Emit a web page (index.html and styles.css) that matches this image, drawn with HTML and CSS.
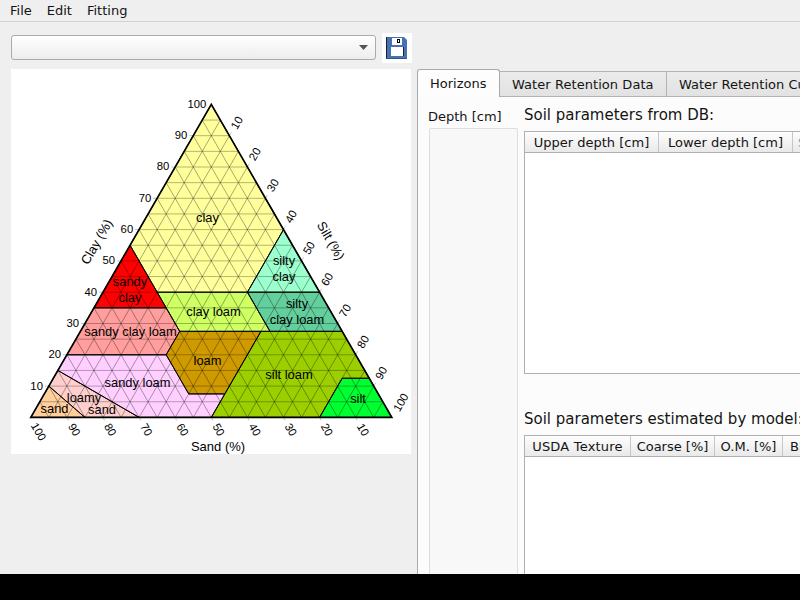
FILE: index.html
```html
<!DOCTYPE html>
<html lang="en">
<head>
<meta charset="utf-8">
<title>Soil Texture</title>
<link rel="stylesheet" href="styles.css">
</head>
<body>
<div class="window">
  <nav class="menubar"><span>File</span><span>Edit</span><span>Fitting</span></nav>
  <div class="main">
    <section class="left">
      <div class="toolbar">
        <div class="combo"><svg width="9" height="5" viewBox="0 0 9 5"><path d="M0 0H9L4.5 5Z" fill="#555"/></svg></div>
        <div class="save">
          <svg width="30" height="30" viewBox="0 0 30 30">
            <path d="M4 4H22L25 7V26H4Z" fill="#4672b4"/>
            <path d="M4.5 4V26" stroke="#182030" stroke-width="1"/>
            <path d="M4 25.5H25" stroke="#30558e" stroke-width="1"/>
            <rect x="10" y="5" width="10" height="7" fill="#fff"/>
            <rect x="15.5" y="6.5" width="2" height="3" fill="#fff" stroke="#000" stroke-width="1"/>
            <rect x="9" y="14" width="13" height="9" fill="#fff"/>
            <path d="M21.5 14V23" stroke="#182030" stroke-width="1"/>
          </svg>
        </div>
      </div>
      <svg class="chart" id="chart" width="400" height="385" viewBox="11 69 400 385"></svg>
    </section>
    <section class="right">
      <div class="tabs">
        <div class="tab active">Horizons</div>
        <div class="tab second">Water Retention Data</div>
        <div class="tab third">Water Retention Curve</div>
      </div>
      <div class="pane">
        <div class="depth"><div class="depth-label">Depth [cm]</div><div class="depth-box"></div></div>
        <div class="tables">
          <h2>Soil parameters from DB:</h2>
          <div class="table first">
            <div class="head"><span class="w134">Upper depth [cm]</span><span class="w134">Lower depth [cm]</span><span class="cut">Sand [%]</span></div>
          </div>
          <h2>Soil parameters estimated by model:</h2>
          <div class="table last">
            <div class="head"><span class="w106">USDA Texture</span><span class="w84">Coarse [%]</span><span class="w68">O.M. [%]</span><span class="bd">BD [g/cm3]</span></div>
          </div>
        </div>
      </div>
    </section>
  </div>
</div>
<script src="script.js"></script>
</body>
</html>
```
FILE: styles.css
```css
* { box-sizing: border-box; }
body { margin: 0; height: 600px; background: #000; overflow: hidden; font: 13px "DejaVu Sans", sans-serif; color: #141414; }
.window { height: 574px; background: #efefef; overflow: hidden; display: flex; flex-direction: column; }
.menubar { height: 22px; flex: none; border-bottom: 1px solid #d3d3d3; display: flex; gap: 15px; padding-left: 10px; line-height: 21px; }
.main { flex: 1; display: flex; min-height: 0; }
.left { width: 417px; flex: none; padding: 11px 0 0 11px; }
.toolbar { display: flex; gap: 6px; height: 36px; }
.combo { width: 365px; height: 25px; margin-top: 2px; border: 1px solid #ababab; border-radius: 3px; background: linear-gradient(#fff, #ededed); display: flex; align-items: center; justify-content: flex-end; padding-right: 7px; }
.save { width: 30px; height: 30px; background: #fff; }
.save svg, .chart { display: block; }
.chart { background: #fff; font-family: "Liberation Sans", sans-serif; }
.chart .tick-label { font-size: 11.3px; text-anchor: middle; }
.chart .axis { font-size: 13px; text-anchor: middle; }
.chart .name { font-size: 12.9px; text-anchor: middle; }
.right { flex: none; width: 600px; padding-top: 47px; display: flex; flex-direction: column; }
.tabs { height: 28px; display: flex; align-items: flex-end; flex: none; }
.tab { flex: none; height: 26px; line-height: 26px; border: 1px solid #b3b3b3; border-left: 0; background: linear-gradient(#ebebeb, #e2e2e2); padding-left: 12px; white-space: nowrap; }
.tab.active { width: 83px; height: 28px; border: 1px solid #a9a9a9; border-bottom: 0; border-radius: 3px 3px 0 0; background: #fdfdfd; line-height: 28px; }
.second { width: 167px; letter-spacing: 0.06px; }
.third { width: 174px; }
.pane { flex: 1; border-left: 1px solid #a9a9a9; background: #fcfcfc; display: flex; }
.depth { width: 106px; flex: none; padding: 11px 0 0 10px; display: flex; flex-direction: column; }
.depth-label { height: 20px; line-height: 18px; white-space: nowrap; }
.depth-box { width: 89px; flex: 1; margin-left: 1px; border: 1px solid #dedede; border-bottom: 0; border-radius: 2px 2px 0 0; background: #f8f8f8; }
.tables { flex: 1; display: flex; flex-direction: column; }
h2 { margin: 0; font-size: 15px; font-weight: 400; height: 34px; line-height: 37px; white-space: nowrap; transform: scaleY(1.07); }
.table { flex: 1; border: 1px solid #b0b0b0; background: #fff; }
.table.first { flex: none; height: 243px; margin-bottom: 27px; }
.table.last { border-bottom: 0; }
.head { height: 21px; border-bottom: 1px solid #b0b0b0; background: linear-gradient(#fefefe, #e9e9e9); display: flex; line-height: 21px; white-space: nowrap; }
.head span { flex: none; border-right: 1px solid #c6c6c6; text-align: center; }
.w134 { width: 134px; }
.w106 { width: 106px; letter-spacing: 0.2px; }
.w84 { width: 84px; }
.w68 { width: 68px; }
.head .cut { width: 90px; padding-left: 5px; text-align: left; color: #999; }
.head .bd { width: 90px; padding-left: 7px; text-align: left; }
```
FILE: script.js
```js
const chart = document.getElementById("chart");
const NS = "http://www.w3.org/2000/svg";

// Converts clay and silt percentages to chart coordinates.
const point = (clay, silt) => [30.8 + 3.61 * silt + 1.805 * clay, 417.4 - 3.13 * clay];

function add(tag, attrs, text) {
  const el = document.createElementNS(NS, tag);
  for (const key in attrs) el.setAttribute(key, attrs[key]);
  if (text) el.textContent = text;
  chart.appendChild(el);
}

const classes = [
  ["#ffff9c", [[55, 0], [100, 0], [60, 40], [40, 40], [40, 15]]],
  ["#ff0000", [[35, 0], [55, 0], [35, 20]]],
  ["#ff9e9c", [[20, 0], [35, 0], [35, 20], [27.5, 27.5], [20, 27.5]]],
  ["#ceff63", [[40, 15], [40, 40], [27.5, 52.5], [27.5, 27.5]]],
  ["#9cffce", [[60, 40], [40, 60], [40, 40]]],
  ["#63cf9c", [[40, 40], [40, 60], [27.5, 72.5], [27.5, 52.5]]],
  ["#ce9a00", [[27.5, 27.5], [27.5, 50], [7.5, 50], [7.5, 40], [20, 27.5]]],
  ["#ffcfff", [[15, 0], [20, 0], [20, 27.5], [7.5, 40], [7.5, 50], [0, 50], [0, 30]]],
  ["#ffcfce", [[10, 0], [15, 0], [0, 30], [0, 15]]],
  ["#ffcf9c", [[0, 0], [10, 0], [0, 15]]],
  ["#9ccf00", [[27.5, 50], [27.5, 72.5], [12.5, 87.5], [12.5, 80], [0, 80], [0, 50]]],
  ["#00ff31", [[12.5, 80], [12.5, 87.5], [0, 100], [0, 80]]]
];
const outline = list => list.map(p => point(...p).join()).join(" ");
classes.forEach(([fill, list]) => add("polygon", { points: outline(list), fill }));

function line(a, b, stroke, opacity) {
  add("line", { x1: a[0], y1: a[1], x2: b[0], y2: b[1], stroke, "stroke-width": 0.8, "stroke-opacity": opacity });
}
for (let v = 5; v < 100; v += 5) {
  line(point(v, 0), point(v, 100 - v), "#000", 0.36);
  line(point(0, v), point(100 - v, v), "#000", 0.42);
  line(point(0, 100 - v), point(100 - v, 0), "#000", 0.42);
}
for (let v = 10; v < 100; v += 10) {
  const l = point(v, 0), b = point(0, v), r = point(100 - v, v);
  line(l, [l[0] - 4, l[1]], "#000", 0.3);
  line(b, [b[0] + 1.5, b[1] + 3], "#000", 0.3);
  line(r, [r[0] + 2, r[1] - 3.5], "#000", 0.3);
}
classes.forEach(([, list]) => add("polygon", { points: outline(list), fill: "none", stroke: "#000", "stroke-width": 0.9 }));
add("polygon", { points: outline([[0, 0], [100, 0], [0, 100]]), fill: "none", stroke: "#000", "stroke-width": 1.7 });

function label(x, y, text, cls, angle) {
  add("text", { class: cls, transform: `translate(${x} ${y}) rotate(${angle || 0})` }, text);
}
for (let v = 10; v <= 100; v += 10) {
  const l = point(v, 0), r = point(100 - v, v), b = point(0, 100 - v);
  label(l[0] - (v === 100 ? 14.5 : 12.2), l[1] + 3.4, v, "tick-label");
  label(r[0] + (v === 100 ? 12.5 : 10.8), r[1] - (v === 100 ? 13 : 11), v, "tick-label", -60);
  label(b[0] + (v === 100 ? 4.5 : 4), b[1] + (v === 100 ? 16.2 : 14.2), v, "tick-label", 60);
}
label(100.5, 244, "Clay (%)", "axis", -60);
label(327, 243, "Silt (%)", "axis", 60);
label(218, 451, "Sand (%)", "axis");
[
  [207.5, 221.6, "clay"], [130, 285.6, "sandy"], [130, 301.6, "clay"],
  [284, 264.8, "silty"], [284, 280.8, "clay"], [297, 307.8, "silty"], [297, 323.8, "clay loam"],
  [213.5, 315.8, "clay loam"], [130.5, 335.5, "sandy clay loam"], [207.5, 364.8, "loam"],
  [137.5, 386.8, "sandy loam"], [289, 379, "silt loam"], [358, 403, "silt"],
  [84, 402, "loamy"], [102, 414.4, "sand"], [54.5, 413.4, "sand"]
].forEach(([x, y, text]) => label(x, y, text, "name"));
```
